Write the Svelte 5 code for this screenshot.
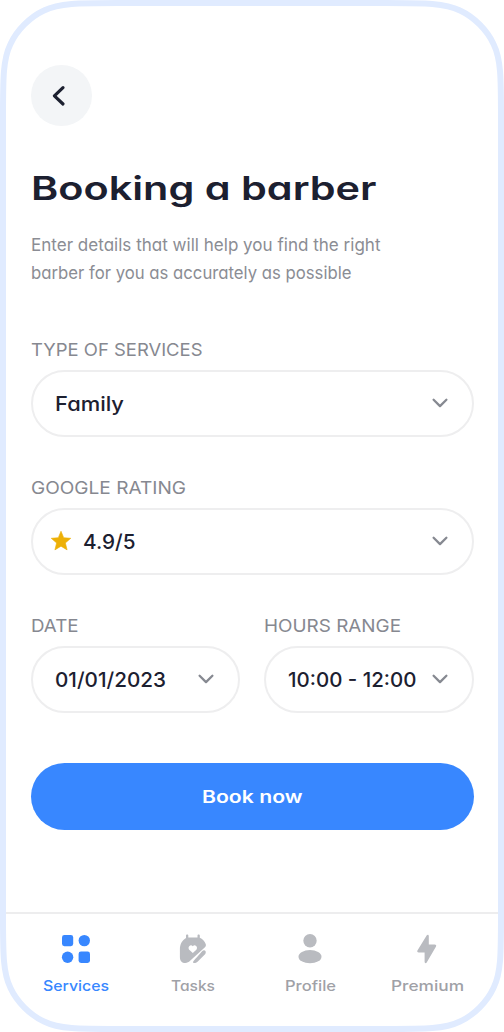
<script>
  let service = "Family";
  let rating = "4.9/5";
  let date = "01/01/2023";
  let hours = "10:00 - 12:00";
  let active = "Services";

  // w is the drawn width of each label
  const tabs = [
    { name: "Services", w: 66 },
    { name: "Tasks", w: 44 },
    { name: "Profile", w: 51 },
    { name: "Premium", w: 73 },
  ];
</script>

<!-- Wide lettering: the text is stretched to the given width -->
{#snippet wide(text, w, h, base)}
  <svg class="wide" width={w} height={h} aria-label={text}>
    <text x="0" y={base} textLength={w} lengthAdjust="spacingAndGlyphs">{text}</text>
  </svg>
{/snippet}

{#snippet chevron()}
  <svg class="chevron" width="18" height="12" viewBox="0 0 18 12">
    <path d="M2.6 2.8 9 9.1l6.4-6.3" />
  </svg>
{/snippet}

<div class="screen">
  <svg class="frame" width="504" height="1032" viewBox="0 0 504 1032">
    <path
      d="M3 118C3 78 3 59 10.5 44C17 30 30 17 44 10.5C59 3 78 3 118 3H386C426 3 445 3 460 10.5C474 17 487 30 493.5 44C501 59 501 78 501 118V914C501 954 501 973 493.5 988C487 1002 474 1015 460 1021.5C445 1029 426 1029 386 1029H118C78 1029 59 1029 44 1021.5C30 1015 17 1002 10.5 988C3 973 3 954 3 914Z"
    />
  </svg>

  <main>
    <button class="back" aria-label="Back">
      <svg width="20" height="24" viewBox="0 0 20 24">
        <path d="M14 3.6 5.4 11.8l8.6 8.2" />
      </svg>
    </button>

    <h1>{@render wide("Booking a barber", 345.5, 48, 34)}</h1>

    <p class="intro">
      {@render wide("Enter details that will help you find the right", 349.5, 27.5, 20)}
      {@render wide("barber for you as accurately as possible", 320.5, 27.5, 20)}
    </p>

    <form>
      <div class="field">
        <span class="label">{@render wide("TYPE OF SERVICES", 171.5, 20, 15.7)}</span>
        <button type="button" class="select">
          {@render wide(service, 69, 28, 21.5)}
          {@render chevron()}
        </button>
      </div>

      <div class="field">
        <span class="label">{@render wide("GOOGLE RATING", 155, 20, 15.7)}</span>
        <button type="button" class="select rated">
          <svg class="star" width="22" height="22" viewBox="0 0 22 22">
            <path
              d="M11 1.2 13.7 7.7 20.8 8.3 15.4 12.9 17.1 19.9 11 16.2 4.9 19.9 6.6 12.9 1.2 8.3 8.3 7.7Z"
            />
          </svg>
          {@render wide(rating, 52.5, 28, 21.5)}
          {@render chevron()}
        </button>
      </div>

      <div class="row">
        <div class="field">
          <span class="label">{@render wide("DATE", 47.5, 20, 16)}</span>
          <button type="button" class="select">
            {@render wide(date, 111, 28, 22)}
            {@render chevron()}
          </button>
        </div>
        <div class="field">
          <span class="label">{@render wide("HOURS RANGE", 137, 20, 16)}</span>
          <button type="button" class="select">
            {@render wide(hours, 128.5, 28, 22)}
            {@render chevron()}
          </button>
        </div>
      </div>

      <button type="button" class="submit">{@render wide("Book now", 100.5, 26, 19.5)}</button>
    </form>
  </main>

  <nav>
    {#each tabs as tab}
      <button class="tab" class:active={tab.name === active} on:click={() => (active = tab.name)}>
        <svg width="34" height="34" viewBox="0 0 34 34">
          {#if tab.name === "Services"}
            <rect x="3" y="3" width="11.2" height="11.2" rx="2.4" />
            <circle cx="25.3" cy="8.6" r="5.7" />
            <circle cx="8.6" cy="25.2" r="5.7" />
            <rect x="19.6" y="19.6" width="11.4" height="11.4" rx="2.4" />
          {:else if tab.name === "Tasks"}
            <path
              fill-rule="evenodd"
              d="M11.2 2.4c.7 0 1.1.5 1.1 1.2V5.4h9.2V3.6c0-.7.4-1.2 1.1-1.2s1.2.5 1.2 1.2V5.8c2.6 1.2 4.9 3.5 5.9 6.3.5 1.5.1 2.4-1 3.4L14.1 28.8c-1.4 1.3-2.8 2.2-4.8 2.2-3.3 0-5.4-2.2-5.4-5.8V17.2C3.9 12 6.2 8 10 5.9V3.6c0-.7.5-1.2 1.2-1.2ZM16.8 21l3.3-3.1c1.5-1.5 1-4.1-.9-4.5-.9-.2-1.8.2-2.4.9-.6-.7-1.5-1.1-2.4-.9-1.9.4-2.4 3-.9 4.5Z"
            />
            <path
              d="M26.3 18.9c2.3-1.6 4.5.4 3 3L21.8 29.4c-1.5 1.3-2.7 1.8-4.1 1.6-.8-.2-.8-1-.3-1.7 1.1-1.6 2-2.6 3.5-4.1Z"
            />
          {:else if tab.name === "Profile"}
            <circle cx="17" cy="8.8" r="6.7" />
            <ellipse cx="17" cy="24.7" rx="11.5" ry="6.6" />
          {:else}
            <path
              d="M16.8 3.2c.9-1 2-.5 2 .9v8.5h5.8c1.5 0 2.1 1 1.3 2.2L16.7 30.5c-.8 1.2-2.1.8-2.1-.7V20.4H8.8c-1.5 0-2-1-1.2-2.2Z"
            />
          {/if}
        </svg>
        {@render wide(tab.name, tab.w, 20, 15.8)}
      </button>
    {/each}
  </nav>
</div>

<style>
  :global(body) {
    margin: 0;
    background: #fff;
  }

  .screen {
    position: relative;
    box-sizing: border-box;
    width: 504px;
    height: 1032px;
    padding: 0 6px 6px;
    display: flex;
    flex-direction: column;
    justify-content: space-between;
    overflow: hidden;
    background: #fff;
    font-family: Inter, "Liberation Sans", sans-serif;
    font-feature-settings: "cv11";
    color: #1c2030;
  }

  .frame {
    position: absolute;
    inset: 0;
    pointer-events: none;
  }

  .frame path {
    fill: none;
    stroke: #e0ebff;
    stroke-width: 6;
  }

  button {
    margin: 0;
    padding: 0;
    border: 0;
    background: none;
    color: inherit;
    font: inherit;
    font-feature-settings: inherit;
    cursor: pointer;
  }

  svg {
    display: block;
    flex: none;
  }

  .wide {
    overflow: visible;
    fill: currentColor;
  }

  main {
    padding: 65px 24.5px 0;
  }

  .back {
    display: flex;
    align-items: center;
    width: 61.5px;
    height: 61px;
    padding-left: 18.5px;
    border-radius: 50%;
    background: #f3f5f7;
  }

  .back path {
    fill: none;
    stroke: #1c2030;
    stroke-width: 3.2;
    stroke-linecap: round;
    stroke-linejoin: round;
  }

  h1 {
    margin: 40px 0 0;
    font-size: 33px;
    font-weight: 630;
  }

  .intro {
    margin: 17px 0 0;
    font-size: 17.5px;
    color: #8b8d94;
  }

  form {
    display: flex;
    flex-direction: column;
    gap: 41.7px;
    margin-top: 54px;
  }

  .field {
    display: flex;
    flex-direction: column;
    gap: 9.5px;
  }

  .label {
    font-size: 17.5px;
    color: #868890;
  }

  .select {
    display: flex;
    align-items: center;
    justify-content: space-between;
    box-sizing: border-box;
    height: 67px;
    padding: 0 23px 0 22px;
    border: 2px solid #eeeeef;
    border-radius: 34px;
    font-size: 20px;
    font-weight: 450;
  }

  .rated {
    padding-left: 17.5px;
  }

  .rated .chevron {
    margin-left: auto;
  }

  .star {
    margin-right: 10.5px;
    fill: #edb007;
    stroke: #edb007;
    stroke-width: 0.6;
    stroke-linejoin: round;
  }

  .chevron path {
    fill: none;
    stroke: #868991;
    stroke-width: 2.3;
    stroke-linecap: round;
    stroke-linejoin: round;
  }

  .row {
    display: grid;
    grid-template-columns: 1fr 1fr;
    gap: 24.5px;
  }

  .submit {
    display: flex;
    align-items: center;
    justify-content: center;
    height: 67.5px;
    margin-top: 8px;
    border-radius: 34px;
    background: #3887ff;
    color: #fff;
    font-size: 17px;
    font-weight: 600;
  }

  nav {
    display: grid;
    grid-template-columns: repeat(4, 1fr);
    box-sizing: border-box;
    height: 114px;
    padding: 18px 12.5px 0 11.5px;
    border-top: 2px solid #ededee;
  }

  .tab {
    display: flex;
    flex-direction: column;
    align-items: center;
    gap: 9px;
    height: 63px;
    color: #9fa1a7;
    font-size: 14.5px;
    font-weight: 500;
  }

  .tab > svg:first-child {
    fill: #b9bbc0;
  }

  .tab.active,
  .tab.active > svg:first-child {
    color: #3887ff;
    fill: #3887ff;
  }
</style>
